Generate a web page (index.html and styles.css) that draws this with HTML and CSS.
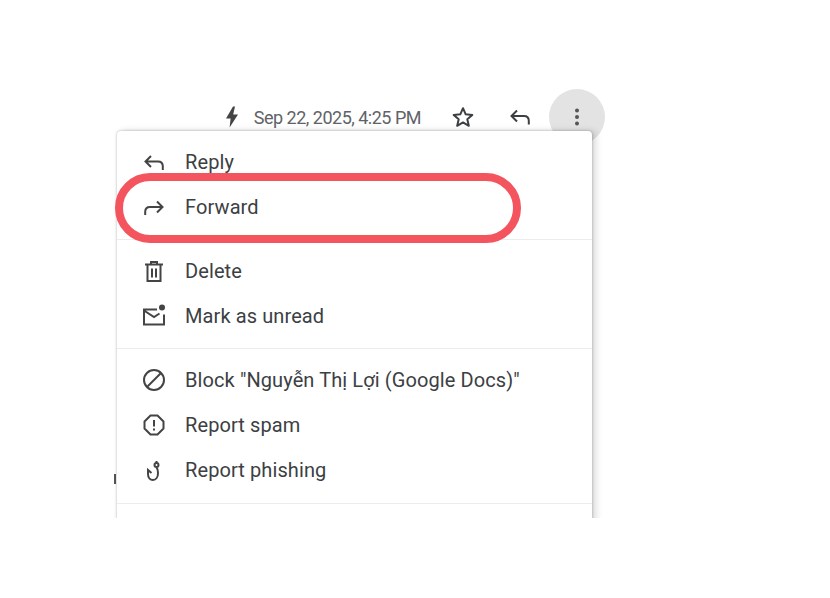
FILE: index.html
```html
<!DOCTYPE html>
<html lang="en">
<head>
    <meta charset="UTF-8">
    <meta name="viewport" content="width=device-width, initial-scale=1.0">
    <title>Message menu</title>
    <link rel="stylesheet" href="styles.css">
</head>
<body>

    <div class="page">
        <div class="toolbar">
            <svg class="bolt" viewBox="0 0 14 22"><path d="M8 0.500 1 12.500h4.600L4.600 21.500 13 8.500H8.200L10 0.500z"/></svg>
            <span class="date">Sep 22, 2025, 4:25 PM</span>
            <svg class="star" viewBox="0 0 24 24"><path d="M12 3.200l2.700 6.100 6.600.6-5 4.400 1.500 6.500L12 17.400l-5.800 3.400 1.500-6.500-5-4.400 6.600-.6z"/></svg>
            <svg class="reply-top" viewBox="0 0 24 24"><path d="M9 5.500 3.500 11 9 16.500M3.500 11H16c3 0 4.800 2 4.800 4.800V19.500"/></svg>
            <div class="more">
                <svg viewBox="0 0 6 22"><circle cx="3" cy="4.500" r="2"/><circle cx="3" cy="11" r="2"/><circle cx="3" cy="17.500" r="2"/></svg>
            </div>
        </div>

        <span class="cut-mark"></span>

        <div class="menu-clip">
            <div class="menu">
                <div class="group">
                    <div class="item">
                        <svg viewBox="0 0 24 24"><path d="M9 6 3.500 11.500 9 17M3.500 11.500H16c3 0 4.800 2 4.800 4.800V20"/></svg>
                        <span>Reply</span>
                    </div>
                    <div class="item">
                        <svg viewBox="0 0 24 24"><path d="M15 6.500 20.500 12 15 17.500M20.500 12H8c-3 0-4.800 2-4.800 4.800V20"/></svg>
                        <span>Forward</span>
                    </div>
                </div>
                <div class="group">
                    <div class="item">
                        <svg viewBox="0 0 24 24"><path d="M3 5.500h18M9 5.500V3h6v2.500M5.500 5.500V22h13V5.500M10 9.500v9M14 9.500v9"/></svg>
                        <span>Delete</span>
                    </div>
                    <div class="item">
                        <svg viewBox="0 0 24 24"><path d="M15 5.500H2v15h20v-10M2 6.500 12 13l5.500-3.500"/><circle class="fill" cx="20" cy="3.500" r="3"/></svg>
                        <span>Mark as unread</span>
                    </div>
                </div>
                <div class="group">
                    <div class="item">
                        <svg viewBox="0 0 24 24"><circle cx="12" cy="12" r="10"/><path d="M5 19 19 5"/></svg>
                        <span>Block "Nguyễn Thị Lợi (Google Docs)"</span>
                    </div>
                    <div class="item">
                        <svg viewBox="0 0 24 24"><path d="M8.500 2.500h7l6 6v7l-6 6h-7l-6-6v-7z" stroke-linejoin="round"/><path d="M12 7v6.500M12 15.500v2"/></svg>
                        <span>Report spam</span>
                    </div>
                    <div class="item">
                        <svg viewBox="0 0 24 24"><path d="M14.500 9.500c1.500 1.500 1.500 3 1.500 5.500 0 4-2 7-5 7s-5-2.500-5-6v-4l3.500 3"/><circle cx="14.500" cy="7" r="2"/><path d="M14.500 3v2"/></svg>
                        <span>Report phishing</span>
                    </div>
                </div>
            </div>
        </div>

        <div class="highlight"></div>
    </div>

</body>
</html>
```

FILE: styles.css
```css
/* General Styling */
body {
    font-family: 'Roboto', 'Liberation Sans', sans-serif;
    background-color: #fff;
    color: #3c4043;
    margin: 0;
}
.page {
    position: relative;
    width: 830px;
    height: 598px;
    overflow: hidden;
}

/* Top row */
.toolbar {
    display: flex;
    align-items: center;
    width: 605px;
    height: 56px;
    padding-top: 89px;
    justify-content: flex-end;
}
.toolbar svg {
    flex: none;
}
.bolt {
    width: 14px;
    height: 22px;
    fill: #444;
    margin-right: 15px;
}
.date {
    font-size: 18px;
    letter-spacing: -0.5px;
    color: #5f6368;
    margin-right: 30px;
}
.star {
    width: 24px;
    height: 24px;
    fill: none;
    stroke: #3c4043;
    stroke-width: 2;
    stroke-linejoin: round;
    margin-right: 33px;
}
.reply-top {
    width: 24px;
    height: 24px;
    fill: none;
    stroke: #3c4043;
    stroke-width: 2;
    margin-right: 17px;
}
.more {
    width: 56px;
    height: 56px;
    border-radius: 50%;
    background: #e3e3e3;
    display: flex;
    align-items: center;
    justify-content: center;
}
.more svg {
    width: 6px;
    height: 22px;
    fill: #555;
}

/* Menu */
.menu-clip {
    position: absolute;
    top: 110px;
    left: 96px;
    width: 530px;
    height: 408px;
    overflow: hidden;
}
.menu {
    margin: 21px 0 0 21px;
    width: 475px;
    height: 420px;
    background: #fff;
    border-radius: 4px 4px 0 0;
    box-shadow: 0 0 3px rgba(0, 0, 0, 0.28), 4px 0 7px rgba(0, 0, 0, 0.14);
}
.group {
    padding: 8px 0 10px;
    border-bottom: 1px solid #ececec;
}
.group:last-child {
    padding-bottom: 11px;
}
.item {
    display: flex;
    align-items: center;
    height: 45px;
    padding-left: 25px;
    font-size: 20px;
    letter-spacing: 0.1px;
}
.item svg {
    width: 24px;
    height: 24px;
    margin-right: 19px;
    fill: none;
    stroke: #444;
    stroke-width: 2;
}
.item svg .fill {
    fill: #444;
    stroke: none;
}

/* Red outline around Forward */
.highlight {
    position: absolute;
    top: 173px;
    left: 115px;
    width: 406px;
    height: 70px;
    box-sizing: border-box;
    border: 8px solid #f4545e;
    border-radius: 35px;
}

.cut-mark {
    position: absolute;
    top: 474px;
    left: 114px;
    width: 2px;
    height: 10px;
    background: #555;
}
```
